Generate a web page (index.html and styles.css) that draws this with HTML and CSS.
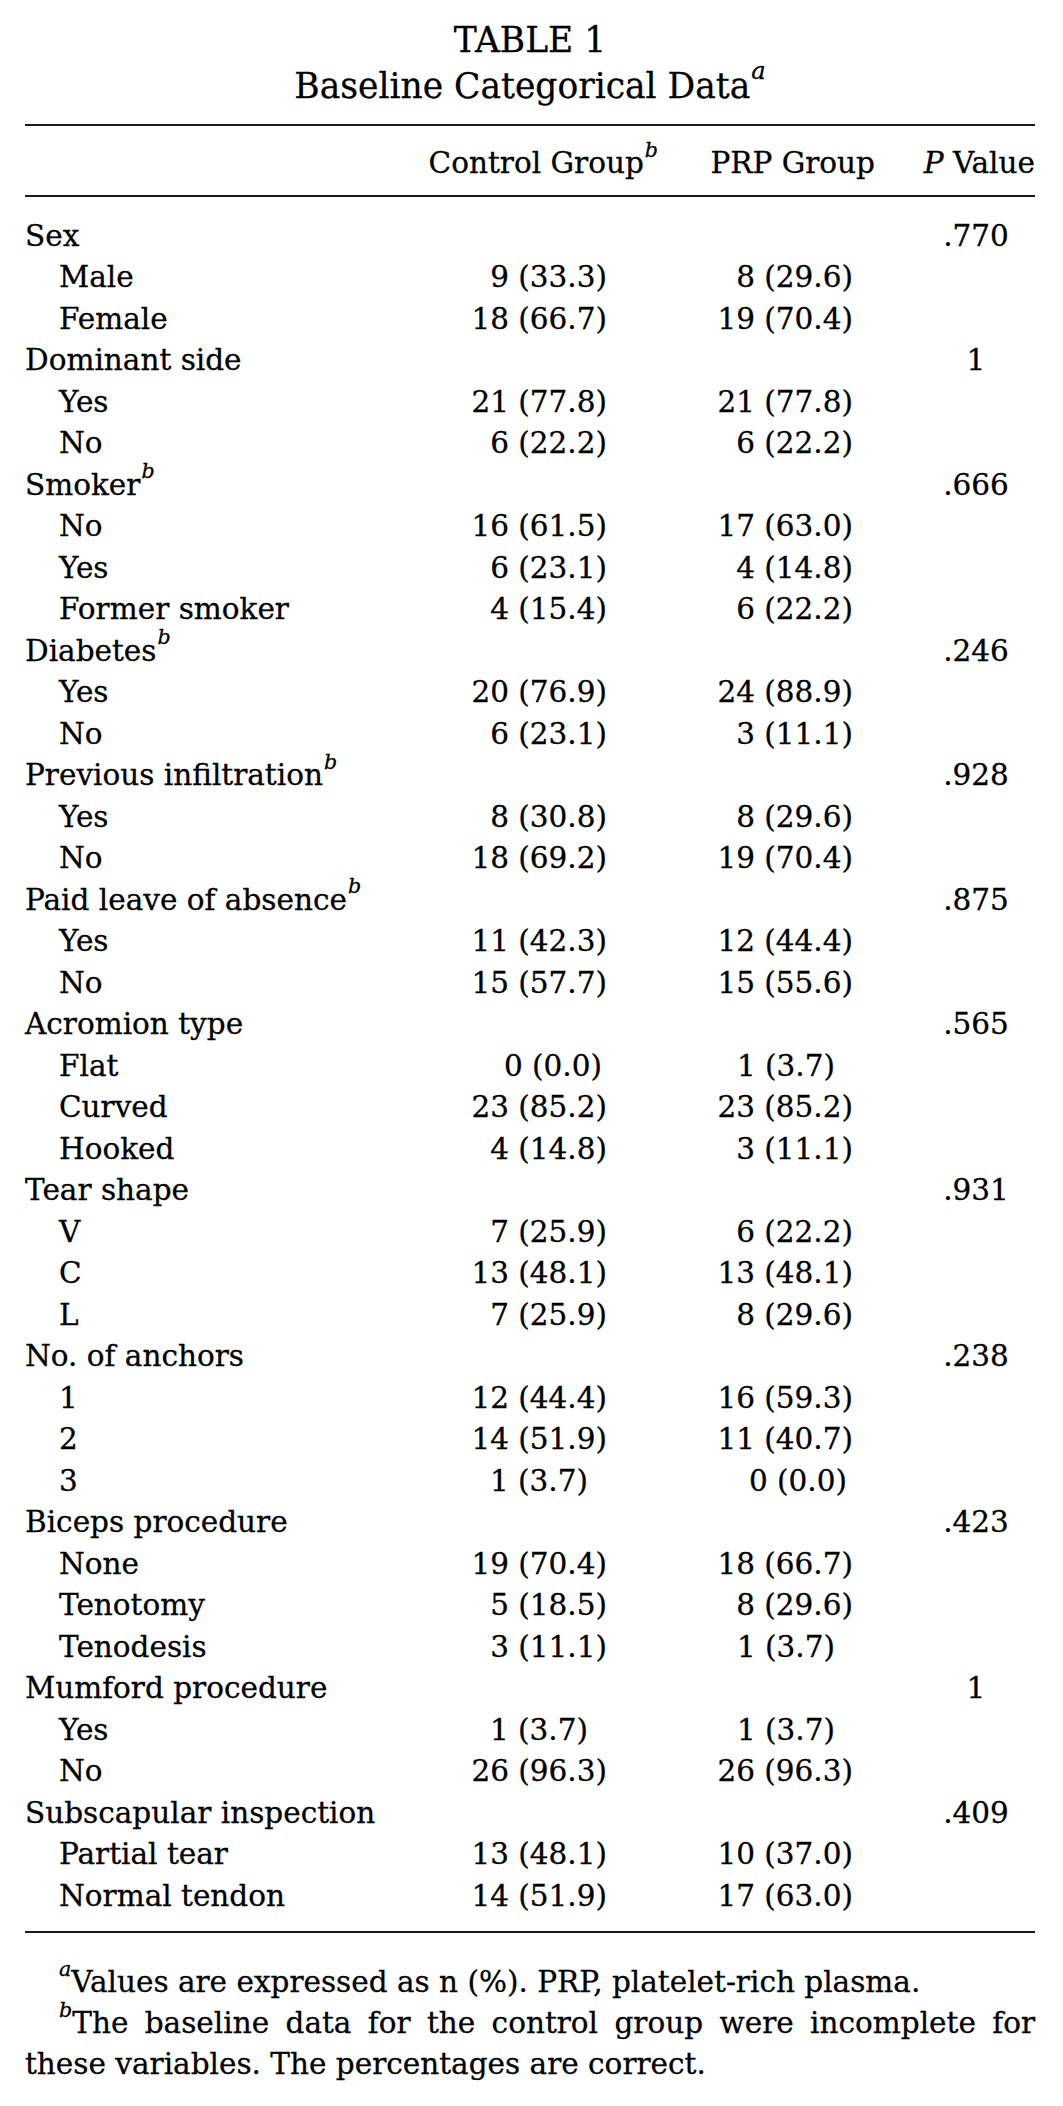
FILE: index.html
```html
<!DOCTYPE html>
<html lang="en">
<head>
<meta charset="utf-8">
<title>TABLE 1 Baseline Categorical Data</title>
<link rel="stylesheet" href="styles.css">
</head>
<body>
<div class="page">
  <header class="caption">
    <div>TABLE 1</div>
    <div>Baseline Categorical Data<span class="fn">a</span></div>
  </header>
  <section class="tbl">
    <div class="row head">
      <div class="lbl"></div>
      <div class="ctl">Control Group<span class="fn">b</span></div>
      <div class="prp">PRP Group</div>
      <div class="pv"><i>P</i> Value</div>
    </div>
    <div class="rows">
      <div class="row"><div class="lbl">Sex</div><div class="pv">.770</div></div>
      <div class="row"><div class="lbl sub">Male</div><div class="ctl">9 (33.3)</div><div class="prp">8 (29.6)</div></div>
      <div class="row"><div class="lbl sub">Female</div><div class="ctl">18 (66.7)</div><div class="prp">19 (70.4)</div></div>

      <div class="row"><div class="lbl">Dominant side</div><div class="pv">1</div></div>
      <div class="row"><div class="lbl sub">Yes</div><div class="ctl">21 (77.8)</div><div class="prp">21 (77.8)</div></div>
      <div class="row"><div class="lbl sub">No</div><div class="ctl">6 (22.2)</div><div class="prp">6 (22.2)</div></div>

      <div class="row"><div class="lbl">Smoker<span class="fn">b</span></div><div class="pv">.666</div></div>
      <div class="row"><div class="lbl sub">No</div><div class="ctl">16 (61.5)</div><div class="prp">17 (63.0)</div></div>
      <div class="row"><div class="lbl sub">Yes</div><div class="ctl">6 (23.1)</div><div class="prp">4 (14.8)</div></div>
      <div class="row"><div class="lbl sub">Former smoker</div><div class="ctl">4 (15.4)</div><div class="prp">6 (22.2)</div></div>

      <div class="row"><div class="lbl">Diabetes<span class="fn">b</span></div><div class="pv">.246</div></div>
      <div class="row"><div class="lbl sub">Yes</div><div class="ctl">20 (76.9)</div><div class="prp">24 (88.9)</div></div>
      <div class="row"><div class="lbl sub">No</div><div class="ctl">6 (23.1)</div><div class="prp">3 (11.1)</div></div>

      <div class="row"><div class="lbl">Previous infiltration<span class="fn">b</span></div><div class="pv">.928</div></div>
      <div class="row"><div class="lbl sub">Yes</div><div class="ctl">8 (30.8)</div><div class="prp">8 (29.6)</div></div>
      <div class="row"><div class="lbl sub">No</div><div class="ctl">18 (69.2)</div><div class="prp">19 (70.4)</div></div>

      <div class="row"><div class="lbl">Paid leave of absence<span class="fn">b</span></div><div class="pv">.875</div></div>
      <div class="row"><div class="lbl sub">Yes</div><div class="ctl">11 (42.3)</div><div class="prp">12 (44.4)</div></div>
      <div class="row"><div class="lbl sub">No</div><div class="ctl">15 (57.7)</div><div class="prp">15 (55.6)</div></div>

      <div class="row"><div class="lbl">Acromion type</div><div class="pv">.565</div></div>
      <div class="row"><div class="lbl sub">Flat</div><div class="ctl n0">0 (0.0)</div><div class="prp n1">1 (3.7)</div></div>
      <div class="row"><div class="lbl sub">Curved</div><div class="ctl">23 (85.2)</div><div class="prp">23 (85.2)</div></div>
      <div class="row"><div class="lbl sub">Hooked</div><div class="ctl">4 (14.8)</div><div class="prp">3 (11.1)</div></div>

      <div class="row"><div class="lbl">Tear shape</div><div class="pv">.931</div></div>
      <div class="row"><div class="lbl sub">V</div><div class="ctl">7 (25.9)</div><div class="prp">6 (22.2)</div></div>
      <div class="row"><div class="lbl sub">C</div><div class="ctl">13 (48.1)</div><div class="prp">13 (48.1)</div></div>
      <div class="row"><div class="lbl sub">L</div><div class="ctl">7 (25.9)</div><div class="prp">8 (29.6)</div></div>

      <div class="row"><div class="lbl">No. of anchors</div><div class="pv">.238</div></div>
      <div class="row"><div class="lbl sub">1</div><div class="ctl">12 (44.4)</div><div class="prp">16 (59.3)</div></div>
      <div class="row"><div class="lbl sub">2</div><div class="ctl">14 (51.9)</div><div class="prp">11 (40.7)</div></div>
      <div class="row"><div class="lbl sub">3</div><div class="ctl n1">1 (3.7)</div><div class="prp n0">0 (0.0)</div></div>

      <div class="row"><div class="lbl">Biceps procedure</div><div class="pv">.423</div></div>
      <div class="row"><div class="lbl sub">None</div><div class="ctl">19 (70.4)</div><div class="prp">18 (66.7)</div></div>
      <div class="row"><div class="lbl sub">Tenotomy</div><div class="ctl">5 (18.5)</div><div class="prp">8 (29.6)</div></div>
      <div class="row"><div class="lbl sub">Tenodesis</div><div class="ctl">3 (11.1)</div><div class="prp n1">1 (3.7)</div></div>

      <div class="row"><div class="lbl">Mumford procedure</div><div class="pv">1</div></div>
      <div class="row"><div class="lbl sub">Yes</div><div class="ctl n1">1 (3.7)</div><div class="prp n1">1 (3.7)</div></div>
      <div class="row"><div class="lbl sub">No</div><div class="ctl">26 (96.3)</div><div class="prp">26 (96.3)</div></div>

      <div class="row"><div class="lbl">Subscapular inspection</div><div class="pv">.409</div></div>
      <div class="row"><div class="lbl sub">Partial tear</div><div class="ctl">13 (48.1)</div><div class="prp">10 (37.0)</div></div>
      <div class="row"><div class="lbl sub">Normal tendon</div><div class="ctl">14 (51.9)</div><div class="prp">17 (63.0)</div></div>
    </div>
  </section>
  <footer class="notes">
    <div class="note-line first single"><span class="fn">a</span>Values are expressed as n (%). PRP, platelet-rich plasma.</div>
    <div class="note-line first justified"><span class="fn">b</span>The baseline data for the control group were incomplete for</div>
    <div class="note-line">these variables. The percentages are correct.</div>
  </footer>
</div>
</body>
</html>
```

FILE: styles.css
```css
* {
  box-sizing: border-box;
}

body {
  margin: 0;
  background: #ffffff;
  color: #000000;
  font-family: "DejaVu Serif", "Liberation Serif", serif;
  -webkit-text-stroke: 0.3px #000000;
}

.page {
  width: 1010px;
  margin-left: 25px;
}

.caption {
  padding-top: 18px;
  margin-bottom: 14.7px;
  font-size: 34.5px;
  line-height: 45.6px;
  text-align: center;
}

.tbl {
  border-top: 2px solid #1a1a1a;
}

.row {
  display: grid;
  grid-template-columns: 400px 243px 215px 152px;
  font-size: 29.5px;
  line-height: 41.5px;
  white-space: nowrap;
}

.head {
  padding: 17px 0 10.5px;
  border-bottom: 2px solid #1a1a1a;
}

.rows {
  padding: 18.7px 0 14px;
  border-bottom: 2px solid #1a1a1a;
}

.lbl {
  grid-column: 1;
}

.lbl.sub {
  padding-left: 34px;
}

.ctl {
  grid-column: 2;
  text-align: right;
  padding-right: 61px;
}

.prp {
  grid-column: 3;
  text-align: right;
  padding-right: 30px;
}

.pv {
  grid-column: 4;
  text-align: center;
  padding-left: 34px;
}

.head .ctl {
  padding-right: 10px;
}

.head .prp {
  padding-right: 8px;
  padding-left: 0;
}

.head .pv {
  text-align: right;
  padding-left: 0;
}

.ctl.n1 {
  padding-right: 80px;
}

.ctl.n0 {
  padding-right: 66px;
}

.prp.n1 {
  padding-right: 48px;
}

.prp.n0 {
  padding-right: 36px;
}

.fn {
  font-size: 0.7em;
  font-style: italic;
  line-height: 0;
  vertical-align: 0.78em;
  margin-left: 1px;
}

.notes {
  padding-top: 29px;
  font-size: 29.5px;
  line-height: 41px;
}

.note-line {
  white-space: nowrap;
}

.note-line.first {
  text-indent: 34px;
}

.note-line.first .fn {
  margin-left: 0;
}

.note-line.justified {
  white-space: normal;
  text-align: justify;
  text-align-last: justify;
}
```
